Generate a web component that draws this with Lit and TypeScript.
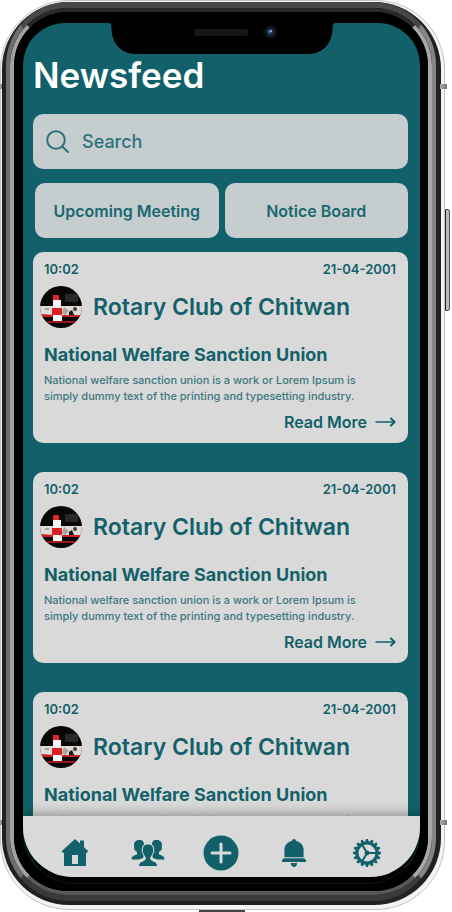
import { LitElement, html, css, svg } from "lit";
import { customElement, property } from "lit/decorators.js";

interface Post {
  time: string;
  date: string;
  club: string;
  title: string;
  body: string;
}

const post: Post = {
  time: "10:02",
  date: "21-04-2001",
  club: "Rotary Club of Chitwan",
  title: "National Welfare Sanction Union",
  body: "National welfare sanction union is a work or Lorem Ipsum is\nsimply dummy text of the printing and typesetting industry.",
};

const posts: Post[] = [post, { ...post }, { ...post }];

const teeth = Array.from({ length: 16 }, (_, i) => (i * 360) / 16);

const icons = {
  home: svg`<svg width="28" height="28" viewBox="0 0 28 28" fill="currentColor" aria-hidden="true">
    <path d="M14 0 L19 4.6 V1.6 H23 V8.2 L27.4 12.2 L25.6 14 L25 13.4 V27 H3 V13.4 L2.2 14 L0.6 12.2 Z"/>
    <path d="M11 16H17V25H11Z" fill="#d9d9d9"/></svg>`,
  users: svg`<svg width="34" height="28" viewBox="0 0 34 28" fill="currentColor" aria-hidden="true">
    <path d="M8.5 1 C12 1 13 3 13 5.5 L12 6.5 C10.5 8 10.6 11 11.6 13 L13 16 L12 19 L8 20.5 H0.6 C0.4 17.6 2 17 5.6 15.6 C6.6 15 6.3 13.8 5.5 12.6 C2.2 10.6 3.5 9 3 6 C3 3 5 1 8.5 1 Z"/>
    <path d="M25.5 1 C22 1 21 3 21 5.5 L22 6.5 C23.5 8 23.4 11 22.4 13 L21 16 L22 19 L26 20.5 H33.4 C33.6 17.6 32 17 28.4 15.6 C27.4 15 27.7 13.8 28.5 12.6 C31.8 10.6 30.5 9 31 6 C31 3 29 1 25.5 1 Z"/>
    <path stroke="#d9d9d9" stroke-width="1" d="M17 5 C21 5 22.8 7.5 22.6 11 C23.4 12 22.6 14 21.8 14.6 C21.4 16.5 20.2 17.6 19.6 18.6 C19.4 20.5 20.3 21.4 23 22.4 C25.5 23.3 26.4 24.5 26.4 27.6 H7.6 C7.6 24.5 8.5 23.3 11 22.4 C13.7 21.4 14.6 20.5 14.4 18.6 C13.8 17.6 12.6 16.5 12.2 14.6 C11.4 14 10.6 12 11.4 11 C11.2 7.5 13 5 17 5 Z"/></svg>`,
  plus: svg`<svg width="36" height="36" viewBox="0 0 36 36" aria-hidden="true">
    <circle cx="18" cy="18" r="17.5" fill="currentColor"/>
    <path d="M18 9V27M9 18H27" stroke="#d9d9d9" stroke-width="3" stroke-linecap="round"/></svg>`,
  bell: svg`<svg width="26" height="28" viewBox="0 0 26 28" fill="currentColor" aria-hidden="true">
    <path d="M13 0 C14.2 0 15 .8 15.2 1.9 C20 3 22.6 6.5 22.6 11 V18.2 H3.4 V11 C3.4 6.5 6 3 10.8 1.9 C11 .8 11.8 0 13 0 Z"/>
    <path d="M3 19.2H23L25 21V23H1V21Z"/><path d="M9.8 24H16.2C16 26.6 14.8 28 13 28S10 26.6 9.8 24Z"/></svg>`,
  gear: svg`<svg width="28" height="28" viewBox="-14 -14 28 28" aria-hidden="true">
    ${teeth.map((a) => svg`<path transform="rotate(${a})" d="M-2 -10.8L-1 -14H1L2 -10.8Z" fill="currentColor"/>`)}
    <circle r="10" fill="none" stroke="currentColor" stroke-width="3"/>
    <path d="M1 0H9M-.5 -1L-4.5 -7.8M-.5 1L-4.5 7.8" stroke="currentColor" stroke-width="2" fill="none"/>
    <circle r="2.4" fill="currentColor"/></svg>`,
};

@customElement("news-card")
export class NewsCard extends LitElement {
  @property({ attribute: false }) post!: Post;

  static styles = css`
    :host {
      display: block;
      flex: none;
    }
    .card {
      box-sizing: border-box;
      padding: 8px 12px 11px 11px;
      border-radius: 10px;
      background: #d9d9d9;
      color: #12616a;
    }
    .meta {
      display: flex;
      justify-content: space-between;
      font-size: 13px;
      line-height: 18px;
      font-weight: 600;
    }
    .club {
      display: flex;
      align-items: center;
      gap: 11px;
      height: 42px;
      margin: 8px 0 0 -4px;
    }
    .avatar {
      flex: none;
      border-radius: 50%;
    }
    h2,
    h3,
    p {
      margin: 0;
      white-space: nowrap;
    }
    h2 {
      font-size: 23px;
      line-height: 32px;
      font-weight: 600;
    }
    h3 {
      margin-top: 15px;
      font-size: 18px;
      line-height: 24px;
      font-weight: 700;
    }
    p {
      margin-top: 5px;
      font-size: 11px;
      line-height: 16px;
      font-weight: 500;
      white-space: pre;
      opacity: 0.8;
    }
    .more {
      display: flex;
      align-items: center;
      justify-content: flex-end;
      gap: 8px;
      margin-top: 8px;
      color: inherit;
      font-size: 16px;
      line-height: 20px;
      font-weight: 600;
      text-decoration: none;
    }
  `;

  render() {
    const p = this.post;
    return html`<article class="card">
      <div class="meta"><time>${p.time}</time><time>${p.date}</time></div>
      <div class="club">
        <svg class="avatar" width="42" height="42" viewBox="0 0 42 42" aria-hidden="true">
          <rect width="42" height="42" fill="#090606" />
          <path d="M25 8H38V16H25Z" fill="#292729" />
          <path d="M0 20H42V29H0Z" fill="#dedada" />
          <path d="M0 28L14 29H42V31H0Z" fill="#c91f24" />
          <path d="M7 35H36V37H7Z" fill="#9c1719" />
          <path d="M13 9H19V14H13Z" fill="#df2a2c" />
          <path d="M13 14H21V22H13Z" fill="#f5f5f5" />
          <path d="M12 22H22V29H12Z" fill="#dd1f22" />
          <path d="M13 29H22V35H13Z" fill="#f5f5f5" />
          <path d="M5 22H9V24H5ZM24 21L29 25L25 29L22 27Z" fill="#a8a49e" />
          <circle cx="35" cy="23" r="2" fill="#4c3734" />
          <path d="M29 29V26L32 24L34 29Z" fill="#171313" />
        </svg>
        <h2>${p.club}</h2>
      </div>
      <h3>${p.title}</h3>
      <p>${p.body}</p>
      <a class="more" href="#read">
        Read More
        <svg width="21" height="10" viewBox="0 0 21 10" fill="none" stroke="currentColor" aria-hidden="true">
          <path d="M1 5H19" stroke-width="1.5" stroke-linecap="round" />
          <path d="M16 1.5L19.6 5L16 8.5" stroke-width="2" stroke-linecap="round" stroke-linejoin="round" />
        </svg>
      </a>
    </article>`;
  }
}

@customElement("app-root")
export class AppRoot extends LitElement {
  static styles = css`
    :host {
      display: block;
      box-sizing: border-box;
      height: 100vh;
      padding: 0 7px 2px 0;
      position: relative;
      overflow: hidden;
      background: #fff;
      color: #12616a;
      font-family: Inter, "Open Sans", sans-serif;
    }
    * {
      box-sizing: border-box;
    }
    .shell,
    .rim,
    .steel,
    .sheen,
    .bezel {
      height: 100%;
    }
    .shell {
      padding: 1px 3px 4px 1px;
      border: 1px solid #c4c4c4;
      border-radius: 69px;
      background: #f4f2f4;
    }
    .rim {
      padding: 0 5px 4px 4px;
      border-radius: 67px;
      background: #202222;
    }
    .steel {
      border: solid;
      border-width: 6px 4px 6px 4px;
      border-color: #484848 #858585 #3a3a3a #6e6e6e;
      border-radius: 63px;
      background: #000;
    }
    .sheen {
      border: solid;
      border-width: 4px;
      border-color: #292929 #a8a8a8 #585858 #a2a2a2;
      border-radius: 58px;
    }
    .bezel {
      position: relative;
      padding: 11px 8px 14px 9px;
      border-radius: 54px;
      background: #000;
    }
    .bezel::before {
      content: "";
      position: absolute;
      left: 9px;
      right: 8px;
      bottom: 7px;
      height: 60px;
      border: 1px solid #0a3338;
      border-top: 0;
      border-bottom-color: #111;
      border-radius: 0 0 52px 52px;
    }
    .screen {
      position: relative;
      display: flex;
      flex-direction: column;
      height: 100%;
      overflow: hidden;
      border-radius: 42px 42px 50px 50px;
      background: #12616a;
    }
    .notch {
      position: absolute;
      top: 0;
      left: 50%;
      transform: translateX(-50%);
    }
    .feed {
      display: flex;
      flex: 1;
      flex-direction: column;
      min-height: 0;
      overflow: hidden;
      padding: 28px 12px 0 10px;
    }
    h1 {
      margin: 0;
      color: #fff;
      font-size: 35px;
      line-height: 48px;
      font-weight: 600;
    }
    .search {
      display: flex;
      flex: none;
      align-items: center;
      gap: 12px;
      height: 55px;
      margin-top: 15px;
      padding: 0 12px;
      border-radius: 10px;
      background: #c5cdcf;
    }
    .search input {
      flex: 1;
      min-width: 0;
      padding: 0;
      border: 0;
      outline: 0;
      background: none;
      color: #2e727a;
      font: 500 18px/24px Inter, "Open Sans", sans-serif;
    }
    .search input::placeholder {
      color: #2e727a;
      opacity: 1;
    }
    .tabs {
      display: flex;
      flex: none;
      gap: 6px;
      margin: 14px 0;
      padding-left: 2px;
    }
    .tabs button {
      flex: 1;
      height: 55px;
      padding: 0;
      border: 0;
      border-radius: 10px;
      background: #c5cdcf;
      color: #1b6871;
      font: 600 16px/24px Inter, "Open Sans", sans-serif;
      white-space: nowrap;
    }
    .posts {
      display: flex;
      flex-direction: column;
      gap: 29px;
    }
    nav {
      position: relative;
      display: flex;
      flex: none;
      height: 61px;
      padding: 12px 17px 0 15px;
      background: #d9d9d9;
      box-shadow: 0 -3px 10px rgba(0, 0, 0, 0.3);
    }
    nav button {
      display: grid;
      flex: 1;
      place-items: center;
      height: 50px;
      padding: 0;
      border: 0;
      background: none;
      color: #12616a;
    }
    .power {
      position: absolute;
      top: 209px;
      right: 2px;
      width: 5px;
      height: 102px;
      border: 1px solid #555;
      border-left-color: #222;
      border-radius: 0 3px 3px 0;
      background: #bbb;
    }
    .port {
      position: absolute;
      bottom: 0;
      left: 44%;
      width: 46px;
      height: 2px;
      background: #444;
    }
    .band {
      position: absolute;
      width: 7px;
      height: 5px;
      right: 5px;
      background: linear-gradient(90deg, #aaa, #777);
    }
    .band.left {
      left: 0;
      width: 2px;
    }
    .band.upper {
      top: 84px;
    }
    .band.lower {
      bottom: 87px;
    }
  `;

  render() {
    return html`
      <div class="shell"><div class="rim"><div class="steel"><div class="sheen"><div class="bezel">
        <main class="screen">
          <section class="feed">
            <h1>Newsfeed</h1>
            <label class="search">
              <svg width="25" height="25" viewBox="0 0 25 25" fill="none" stroke="#2e727a" stroke-width="2" stroke-linecap="round" aria-hidden="true">
                <circle cx="11" cy="11" r="8.8" />
                <path d="M17.3 17.5L23 23" />
              </svg>
              <input type="search" placeholder="Search" aria-label="Search" />
            </label>
            <div class="tabs">
              <button type="button">Upcoming Meeting</button>
              <button type="button">Notice Board</button>
            </div>
            <div class="posts">
              ${posts.map((p) => html`<news-card .post=${p}></news-card>`)}
            </div>
          </section>
          <nav aria-label="Main">
            <button type="button" aria-label="Home">${icons.home}</button>
            <button type="button" aria-label="Members">${icons.users}</button>
            <button type="button" aria-label="Add">${icons.plus}</button>
            <button type="button" aria-label="Notifications">${icons.bell}</button>
            <button type="button" aria-label="Settings">${icons.gear}</button>
          </nav>
          <svg class="notch" width="229" height="32" viewBox="0 0 229 32" aria-hidden="true">
            <path d="M0 0C3 0 4 1 4 5C4 21 14 31 29 31H200C215 31 225 21 225 5C225 1 226 0 229 0Z" fill="#000" />
            <rect x="86" y="6" width="55" height="7" rx="3.5" fill="#161616" />
            <circle cx="163" cy="9" r="6.5" fill="#111" />
            <circle cx="163" cy="9" r="4" fill="#182747" />
            <circle cx="162.5" cy="8.5" r="2" fill="#4264a0" />
            <circle cx="163.5" cy="8" r="1" fill="#9cb5dc" />
          </svg>
        </main>
      </div></div></div></div></div>
      <span class="power"></span>
      <span class="port"></span>
      <span class="band upper"></span>
      <span class="band lower"></span>
      <span class="band left upper"></span>
      <span class="band left lower"></span>
    `;
  }
}
